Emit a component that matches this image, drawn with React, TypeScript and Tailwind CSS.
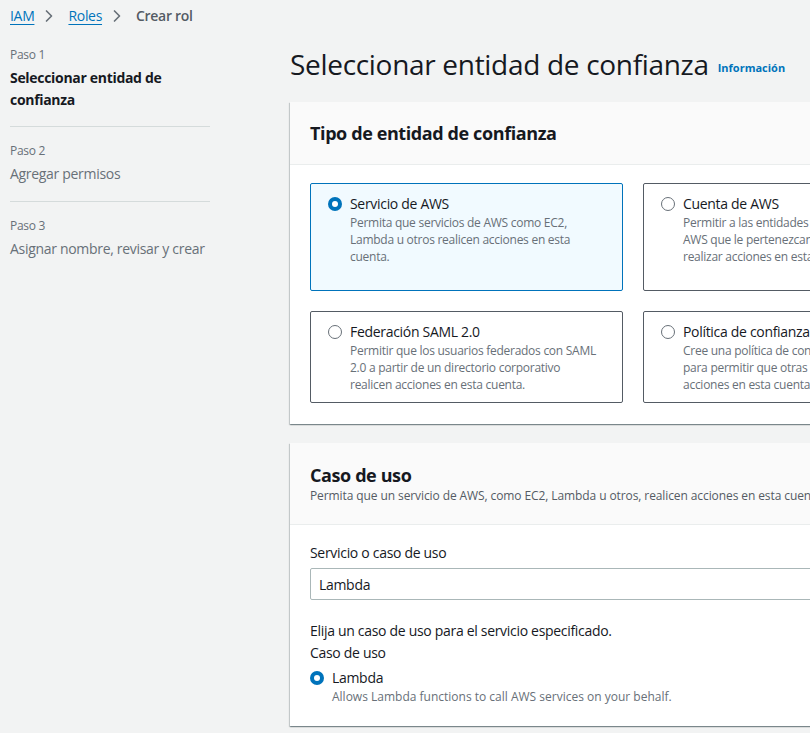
import { ChevronRight } from 'lucide-react';

const font = { fontFamily: '"Open Sans", "Noto Sans", sans-serif' };

function Radio({ checked }: { checked?: boolean }) {
    if (checked) {
        return (
            <span className="mt-[3px] flex h-[14px] w-[14px] shrink-0 items-center justify-center rounded-full bg-[#0073bb]">
                <span className="h-[6px] w-[6px] rounded-full bg-white" />
            </span>
        );
    }
    return (
        <span className="mt-[3px] h-[14px] w-[14px] shrink-0 rounded-full border border-[#687078] bg-white" />
    );
}

function Tile({
    title,
    lines,
    checked,
    tall,
}: {
    title: string;
    lines: string[];
    checked?: boolean;
    tall?: boolean;
}) {
    return (
        <div
            className={`flex w-[313px] shrink-0 gap-[8px] rounded-[2px] border px-[17px] pt-[10px] ${
                tall ? 'h-[108px]' : 'h-[92px]'
            } ${checked ? 'border-[#0073bb] bg-[#f1faff]' : 'border-[#545b64] bg-white'}`}
        >
            <Radio checked={checked} />
            <div className="flex flex-col whitespace-nowrap">
                <span className="text-[14px] leading-[20px] text-[#16191f]">{title}</span>
                {lines.map((l) => (
                    <span key={l} className="text-[12px] leading-[17px] text-[#687078]">
                        {l}
                    </span>
                ))}
            </div>
        </div>
    );
}

const panelShadow =
    'shadow-[0_1px_1px_0_rgba(0,28,36,0.3),1px_1px_1px_0_rgba(0,28,36,0.15),-1px_1px_1px_0_rgba(0,28,36,0.15)]';

export default function App() {
    return (
        <div
            style={font}
            className="flex h-[733px] w-[810px] overflow-hidden bg-[#f2f3f3] text-[#16191f] [&_*]:tracking-[-0.022em]"
        >
            <div className="flex w-[280px] shrink-0 flex-col px-[10px]">
                <div className="flex h-[31px] items-center text-[14px]">
                    <span className="text-[#0073bb] underline underline-offset-[3px]">IAM</span>
                    <ChevronRight size={20} strokeWidth={2} className="mx-[5px] text-[#687078]" />
                    <span className="ml-[4px] text-[#0073bb] underline underline-offset-[3px]">Roles</span>
                    <ChevronRight size={20} strokeWidth={2} className="mx-[5px] text-[#687078]" />
                    <span className="ml-[4px] font-semibold text-[#545b64]">Crear rol</span>
                </div>
                <div className="w-[200px] pt-[16px]">
                    <div className="border-b border-[#d5dbdb] pb-[15px]">
                        <div className="text-[12px] leading-[16px] text-[#687078]">Paso 1</div>
                        <div className="mt-[4px] text-[14px] font-bold leading-[22px]">
                            Seleccionar entidad de confianza
                        </div>
                    </div>
                    <div className="border-b border-[#d5dbdb] py-[16px]">
                        <div className="text-[12px] leading-[16px] text-[#687078]">Paso 2</div>
                        <div className="mt-[4px] text-[14px] leading-[22px] text-[#687078]">
                            Agregar permisos
                        </div>
                    </div>
                    <div className="py-[16px]">
                        <div className="text-[12px] leading-[16px] text-[#687078]">Paso 3</div>
                        <div className="mt-[4px] whitespace-nowrap text-[14px] leading-[22px] text-[#687078]">
                            Asignar nombre, revisar y crear
                        </div>
                    </div>
                </div>
            </div>

            <div className="flex w-[686px] shrink-0 flex-col pl-[10px]">
                <div className="flex h-[102px] items-center gap-[9px] pt-[27px] pb-[2px]">
                    <h1 className="text-[28px] leading-[36px] text-[#16191f] !tracking-[-0.011em]">
                        Seleccionar entidad de confianza
                    </h1>
                    <span className="mt-[10px] text-[11px] font-bold text-[#0073bb] !tracking-[0em]">
                        Información
                    </span>
                </div>

                <div className={`w-[686px] bg-white ${panelShadow}`}>
                    <div className="flex h-[63px] items-center border-b border-[#eaeded] bg-[#fafafa] px-[20px]">
                        <h2 className="text-[18px] font-bold">Tipo de entidad de confianza</h2>
                    </div>
                    <div className="flex flex-col gap-[20px] px-[20px] pt-[18px] pb-[21px]">
                        <div className="flex gap-[20px]">
                            <Tile
                                checked
                                tall
                                title="Servicio de AWS"
                                lines={[
                                    'Permita que servicios de AWS como EC2,',
                                    'Lambda u otros realicen acciones en esta',
                                    'cuenta.',
                                ]}
                            />
                            <Tile
                                tall
                                title="Cuenta de AWS"
                                lines={[
                                    'Permitir a las entidades de otras cuentas de',
                                    'AWS que le pertenezcan a usted o a un tercero',
                                    'realizar acciones en esta cuenta.',
                                ]}
                            />
                        </div>
                        <div className="flex gap-[20px]">
                            <Tile
                                title="Federación SAML 2.0"
                                lines={[
                                    'Permitir que los usuarios federados con SAML',
                                    '2.0 a partir de un directorio corporativo',
                                    'realicen acciones en esta cuenta.',
                                ]}
                            />
                            <Tile
                                title="Política de confianza personalizada"
                                lines={[
                                    'Cree una política de confianza personalizada',
                                    'para permitir que otras entidades realicen',
                                    'acciones en esta cuenta.',
                                ]}
                            />
                        </div>
                    </div>
                </div>

                <div className={`mt-[19px] w-[686px] bg-white ${panelShadow}`}>
                    <div className="flex h-[82px] flex-col justify-center border-b border-[#eaeded] bg-[#fafafa] px-[20px]">
                        <h2 className="text-[18px] font-bold leading-[24px]">Caso de uso</h2>
                        <p className="whitespace-nowrap text-[12px] leading-[18px] text-[#545b64] !tracking-[-0.008em]">
                            Permita que un servicio de AWS, como EC2, Lambda u otros, realicen acciones en esta cuenta.
                        </p>
                    </div>
                    <div className="px-[20px] pt-[17px] pb-[20px]">
                        <div className="text-[14px] leading-[22px]">Servicio o caso de uso</div>
                        <div className="mt-[4px] flex h-[32px] items-center rounded-[2px] border border-[#aab7b8] px-[8px] text-[14px]">
                            Lambda
                        </div>
                        <div className="mt-[20px] text-[14px] leading-[22px]">
                            Elija un caso de uso para el servicio especificado.
                        </div>
                        <div className="text-[14px] leading-[22px]">Caso de uso</div>
                        <div className="mt-[4px] flex gap-[8px]">
                            <Radio checked />
                            <div className="flex flex-col">
                                <span className="text-[14px] leading-[20px]">Lambda</span>
                                <span className="text-[12px] leading-[18px] text-[#687078] !tracking-[0em]">
                                    Allows Lambda functions to call AWS services on your behalf.
                                </span>
                            </div>
                        </div>
                    </div>
                </div>
            </div>
        </div>
    );
}
